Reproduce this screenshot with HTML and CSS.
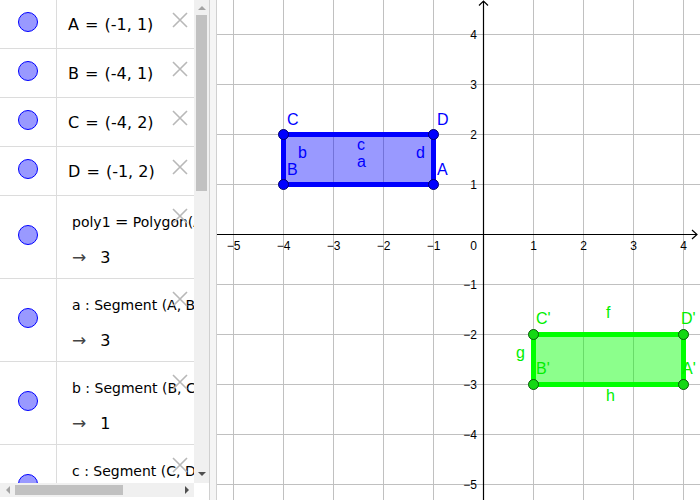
FILE: index.html
```html
<!DOCTYPE html>
<html>
<head>
<meta charset="utf-8">
<link rel="stylesheet" href="styles.css">
</head>
<body>
<div class="app">
  <div class="algebra">
    <div class="av-main">
      <div class="av-list">
        <div class="row">
          <div class="marker"><span class="dot"></span></div>
          <div class="cell"><span class="def">A <span class="eq">=</span> (-1, 1)</span></div>
          <svg class="del" viewBox="0 0 16 16"><path d="M1 1L15 15M15 1L1 15"/></svg>
        </div>
        <div class="row">
          <div class="marker"><span class="dot"></span></div>
          <div class="cell"><span class="def">B <span class="eq">=</span> (-4, 1)</span></div>
          <svg class="del" viewBox="0 0 16 16"><path d="M1 1L15 15M15 1L1 15"/></svg>
        </div>
        <div class="row">
          <div class="marker"><span class="dot"></span></div>
          <div class="cell"><span class="def">C <span class="eq">=</span> (-4, 2)</span></div>
          <svg class="del" viewBox="0 0 16 16"><path d="M1 1L15 15M15 1L1 15"/></svg>
        </div>
        <div class="row">
          <div class="marker"><span class="dot"></span></div>
          <div class="cell"><span class="def">D <span class="eq">=</span> (-1, 2)</span></div>
          <svg class="del" viewBox="0 0 16 16"><path d="M1 1L15 15M15 1L1 15"/></svg>
        </div>
        <div class="row tall">
          <div class="marker"><span class="dot"></span></div>
          <div class="cell two">
            <div class="line1">poly1 <span class="eq">=</span> Polygon(A, B, C, D)</div>
            <div class="line2"><span class="arrow">→</span>3</div>
          </div>
          <svg class="del" viewBox="0 0 16 16"><path d="M1 1L15 15M15 1L1 15"/></svg>
        </div>
        <div class="row tall">
          <div class="marker"><span class="dot"></span></div>
          <div class="cell two">
            <div class="line1">a : Segment (A, B, poly1)</div>
            <div class="line2"><span class="arrow">→</span>3</div>
          </div>
          <svg class="del" viewBox="0 0 16 16"><path d="M1 1L15 15M15 1L1 15"/></svg>
        </div>
        <div class="row tall">
          <div class="marker"><span class="dot"></span></div>
          <div class="cell two">
            <div class="line1">b : Segment (B, C, poly1)</div>
            <div class="line2"><span class="arrow">→</span>1</div>
          </div>
          <svg class="del" viewBox="0 0 16 16"><path d="M1 1L15 15M15 1L1 15"/></svg>
        </div>
        <div class="row tall">
          <div class="marker"><span class="dot"></span></div>
          <div class="cell two">
            <div class="line1">c : Segment (C, D, poly1)</div>
            <div class="line2"><span class="arrow">→</span>3</div>
          </div>
          <svg class="del" viewBox="0 0 16 16"><path d="M1 1L15 15M15 1L1 15"/></svg>
        </div>
      </div>
      <div class="hscroll">
        <div class="sbtn"><span class="tri-left"></span></div>
        <div class="htrack"><div class="hthumb"></div></div>
        <div class="sbtn"><span class="tri-right"></span></div>
      </div>
    </div>
    <div class="vscroll">
      <div class="vbar">
        <div class="vbtn"><span class="tri-up"></span></div>
        <div class="vtrack"><div class="vthumb"></div></div>
        <div class="vbtn down"><span class="tri-down"></span></div>
      </div>
    </div>
  </div>
  <div class="divider"></div>
  <svg class="graph" width="483" height="500" viewBox="217 0 483 500">
    <g class="grid">
      <path d="M233.5 0V500M283.5 0V500M333.5 0V500M383.5 0V500M433.5 0V500M533.5 0V500M583.5 0V500M633.5 0V500M683.5 0V500"/>
      <path d="M217 34.5H700M217 84.5H700M217 134.5H700M217 184.5H700M217 284.5H700M217 334.5H700M217 384.5H700M217 434.5H700M217 484.5H700"/>
    </g>
    <g class="axes">
      <path d="M217 234.5H697M692 230L697 234.5L692 239"/>
      <path d="M483.5 500V1M479 5.5L483.5 1L488 5.5"/>
    </g>
    <g class="ticks">
      <text x="233.5" y="250" class="tx">−5</text>
      <text x="283.5" y="250" class="tx">−4</text>
      <text x="333.5" y="250" class="tx">−3</text>
      <text x="383.5" y="250" class="tx">−2</text>
      <text x="433.5" y="250" class="tx">−1</text>
      <text x="477" y="250" class="ty">0</text>
      <text x="533.5" y="250" class="tx">1</text>
      <text x="583.5" y="250" class="tx">2</text>
      <text x="633.5" y="250" class="tx">3</text>
      <text x="683.5" y="250" class="tx">4</text>
      <text x="477" y="39" class="ty">4</text>
      <text x="477" y="89" class="ty">3</text>
      <text x="477" y="139" class="ty">2</text>
      <text x="477" y="189" class="ty">1</text>
      <text x="477" y="289" class="ty">−1</text>
      <text x="477" y="339" class="ty">−2</text>
      <text x="477" y="389" class="ty">−3</text>
      <text x="477" y="439" class="ty">−4</text>
      <text x="477" y="489" class="ty">−5</text>
    </g>
    <g class="poly-blue">
      <rect x="283.5" y="134.5" width="150" height="50" class="fill"/>
      <rect x="283.5" y="134.5" width="150" height="50" class="edge"/>
      <circle cx="283.5" cy="134.5" r="5"/>
      <circle cx="433.5" cy="134.5" r="5"/>
      <circle cx="283.5" cy="184.5" r="5"/>
      <circle cx="433.5" cy="184.5" r="5"/>
      <text x="287" y="125">C</text>
      <text x="437" y="125">D</text>
      <text x="287" y="175">B</text>
      <text x="437" y="175">A</text>
      <text x="298" y="158">b</text>
      <text x="357" y="150">c</text>
      <text x="357" y="167">a</text>
      <text x="416" y="158">d</text>
    </g>
    <g class="poly-green">
      <rect x="533.5" y="334.5" width="150" height="50" class="fill"/>
      <rect x="533.5" y="334.5" width="150" height="50" class="edge"/>
      <circle cx="533.5" cy="334.5" r="5"/>
      <circle cx="683.5" cy="334.5" r="5"/>
      <circle cx="533.5" cy="384.5" r="5"/>
      <circle cx="683.5" cy="384.5" r="5"/>
      <text x="536" y="324">C'</text>
      <text x="681" y="324">D'</text>
      <text x="606" y="318">f</text>
      <text x="516" y="358">g</text>
      <text x="536" y="374">B'</text>
      <text x="682" y="374">A'</text>
      <text x="606" y="401">h</text>
    </g>
  </svg>
</div>
</body>
</html>
```

FILE: styles.css
```css
html, body {
  margin: 0;
  padding: 0;
  background: #ffffff;
}

body {
  width: 700px;
  height: 500px;
  overflow: hidden;
  font-family: "DejaVu Sans", sans-serif;
  color: #000;
}

.app {
  display: flex;
  width: 700px;
  height: 500px;
}

.algebra {
  display: flex;
  width: 209px;
  height: 500px;
  flex: none;
  background: #fff;
}

.av-main {
  width: 194px;
  display: flex;
  flex-direction: column;
}

.av-list {
  height: 483px;
  overflow: hidden;
  flex: none;
}

.row {
  position: relative;
  display: flex;
  height: 48px;
  border-bottom: 1px solid #dcdcdc;
}

.row.tall {
  height: 82px;
}

.marker {
  width: 57px;
  flex: none;
  box-sizing: border-box;
  border-right: 1px solid #dcdcdc;
  display: flex;
  align-items: center;
  justify-content: center;
  padding-bottom: 4px;
  padding-right: 1px;
}

.dot {
  width: 18px;
  height: 18px;
  border-radius: 50%;
  background: #9999ff;
  border: 1px solid #0000ff;
}

.cell {
  flex: 1;
  min-width: 0;
  white-space: nowrap;
  display: flex;
  align-items: center;
  padding-left: 11px;
  font-size: 16px;
}

.def {
  white-space: pre;
}

.cell .eq {
  margin: 0 1px;
}

.cell.two {
  flex-direction: column;
  align-items: flex-start;
  justify-content: flex-start;
  padding-left: 15px;
  padding-top: 16px;
}

.line1 {
  height: 20px;
  line-height: 20px;
  font-size: 14px;
}

.line1 .eq {
  font-size: 16px;
  margin: 0;
}

.line2 {
  height: 20px;
  line-height: 20px;
  margin-top: 15px;
  font-size: 16px;
}

.arrow {
  font-size: 17px;
  color: #444;
  margin-right: 14px;
}

.del {
  position: absolute;
  left: 172px;
  top: 12px;
  width: 16px;
  height: 16px;
  fill: none;
  stroke: #b8b8b8;
  stroke-width: 1.6;
}

.hscroll {
  height: 14px;
  flex: none;
  display: flex;
  background: #f0f0f0;
}

.sbtn {
  width: 15px;
  display: flex;
  align-items: center;
  justify-content: center;
}

.htrack {
  flex: 1;
  display: flex;
  align-items: center;
}

.hthumb {
  width: 108px;
  height: 10px;
  background: #c1c1c1;
}

.tri-left {
  width: 0;
  height: 0;
  border-top: 4px solid transparent;
  border-bottom: 4px solid transparent;
  border-right: 4px solid #a3a3a3;
}

.tri-right {
  width: 0;
  height: 0;
  border-top: 4px solid transparent;
  border-bottom: 4px solid transparent;
  border-left: 4px solid #505050;
}

.vscroll {
  width: 15px;
  flex: none;
}

.vbar {
  height: 483px;
  background: #f0f0f0;
  display: flex;
  flex-direction: column;
}

.vbtn {
  height: 15px;
  display: flex;
  align-items: center;
  justify-content: center;
  flex: none;
}

.vbtn.down {
  margin-bottom: 2px;
}

.vtrack {
  flex: 1;
  display: flex;
  justify-content: center;
}

.vthumb {
  width: 11px;
  height: 176px;
  background: #c1c1c1;
}

.tri-up {
  width: 0;
  height: 0;
  border-left: 4px solid transparent;
  border-right: 4px solid transparent;
  border-bottom: 4px solid #a3a3a3;
}

.tri-down {
  width: 0;
  height: 0;
  border-left: 4px solid transparent;
  border-right: 4px solid transparent;
  border-top: 4px solid #505050;
}

.divider {
  width: 6px;
  flex: none;
  background: #f5f5f5;
  border-left: 1px solid #d0d0d0;
  border-right: 1px solid #d0d0d0;
}

.graph {
  display: block;
  flex: none;
  background: #fff;
}

.grid path {
  stroke: #c0c0c0;
  stroke-width: 1;
  fill: none;
}

.axes path {
  stroke: #000;
  stroke-width: 1.2;
  fill: none;
}

.ticks text {
  font-family: "Liberation Sans", Arial, sans-serif;
  font-size: 12px;
  fill: #000;
}

.ticks .tx {
  text-anchor: middle;
}

.ticks .ty {
  text-anchor: end;
}

.poly-blue .fill {
  fill: #0000ff;
  fill-opacity: 0.4;
  stroke: none;
}

.poly-blue .edge {
  fill: none;
  stroke: #0000ff;
  stroke-width: 5;
}

.poly-blue circle {
  fill: #0000ff;
  stroke: #00006a;
  stroke-width: 1;
}

.poly-blue text {
  font-family: "Liberation Sans", Arial, sans-serif;
  font-size: 16px;
  fill: #0000ff;
}

.poly-green .fill {
  fill: #00ff00;
  fill-opacity: 0.45;
  stroke: none;
}

.poly-green .edge {
  fill: none;
  stroke: #00ff00;
  stroke-width: 5;
}

.poly-green circle {
  fill: #14d814;
  stroke: #0a5a0a;
  stroke-width: 1;
}

.poly-green text {
  font-family: "Liberation Sans", Arial, sans-serif;
  font-size: 16px;
  fill: #00ee00;
}
```
